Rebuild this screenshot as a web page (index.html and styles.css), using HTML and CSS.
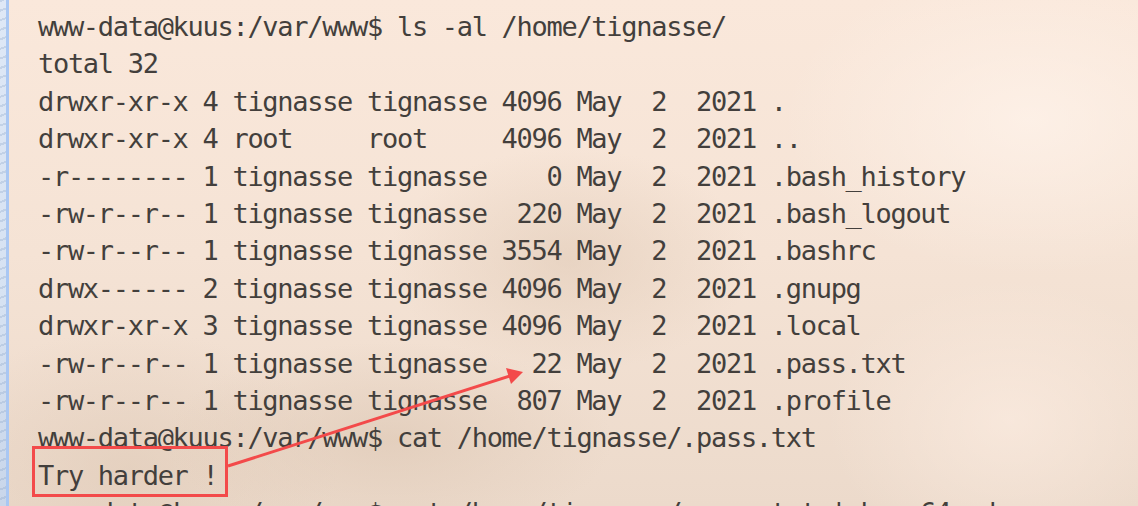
FILE: index.html
```html
<!DOCTYPE html>
<html lang="en">
<head>
<meta charset="utf-8">
<title>Terminal</title>
<link rel="stylesheet" href="styles.css">
</head>
<body>
<div class="screen">
  <div class="wallpaper"></div>
  <div class="edge"></div>
  <main class="terminal">
<pre class="output">www-data@kuus:/var/www$ ls -al /home/tignasse/
total 32
drwxr-xr-x 4 tignasse tignasse 4096 May  2  2021 .
drwxr-xr-x 4 root     root     4096 May  2  2021 ..
-r-------- 1 tignasse tignasse    0 May  2  2021 .bash_history
-rw-r--r-- 1 tignasse tignasse  220 May  2  2021 .bash_logout
-rw-r--r-- 1 tignasse tignasse 3554 May  2  2021 .bashrc
drwx------ 2 tignasse tignasse 4096 May  2  2021 .gnupg
drwxr-xr-x 3 tignasse tignasse 4096 May  2  2021 .local
-rw-r--r-- 1 tignasse tignasse   22 May  2  2021 .pass.txt
-rw-r--r-- 1 tignasse tignasse  807 May  2  2021 .profile
www-data@kuus:/var/www$ cat /home/tignasse/.pass.txt
Try harder !
www-data@kuus:/var/www$ cat /home/tignasse/.pass.txt | base64 -d</pre>
  </main>
  <svg class="annotation" width="1138" height="506" viewBox="0 0 1138 506" aria-hidden="true">
    <rect x="33.5" y="447.5" width="193" height="48" fill="none" stroke="#f34a4a" stroke-width="3"/>
    <line x1="228" y1="466" x2="510" y2="376" stroke="#f34a4a" stroke-width="3"/>
    <polygon points="523,372 506,368 511,384" fill="#f34a4a"/>
  </svg>
</div>
</body>
</html>
```

FILE: styles.css
```css
html, body {
  margin: 0;
  padding: 0;
  width: 1138px;
  height: 506px;
  overflow: hidden;
}

.screen {
  position: relative;
  display: flex;
  width: 1138px;
  height: 506px;
  overflow: hidden;
}

.wallpaper {
  width: 6px;
  flex: none;
  background:
    repeating-linear-gradient(160deg, rgba(120,150,190,0.25) 0 2px, transparent 2px 9px),
    linear-gradient(180deg, #dfe8f6 0%, #d6e2f2 60%, #c9d6ea 100%);
}

.edge {
  width: 3px;
  flex: none;
  background: #a9c7f3;
}

.terminal {
  flex: 1;
  padding: 8px 0 0 29px;
  overflow: hidden;
  background:
    radial-gradient(ellipse 260px 160px at 560px 260px, rgba(222,200,180,0.55), transparent 70%),
    radial-gradient(ellipse 320px 140px at 380px 440px, rgba(218,196,176,0.55), transparent 70%),
    radial-gradient(ellipse 300px 200px at 120px 470px, rgba(220,198,178,0.5), transparent 70%),
    radial-gradient(ellipse 350px 220px at 1020px 120px, rgba(255,244,236,0.7), transparent 70%),
    radial-gradient(ellipse 260px 200px at 1000px 420px, rgba(255,240,230,0.55), transparent 70%),
    linear-gradient(180deg, #fae8db 0%, #f5e3d5 50%, #ecdacb 100%);
}

.output {
  margin: 0;
  font-family: "DejaVu Sans Mono", "Liberation Mono", monospace;
  font-size: 27px;
  letter-spacing: -1.3px;
  line-height: 37.4px;
  color: #433f3c;
  white-space: pre;
}

.annotation {
  position: absolute;
  left: 0;
  top: 0;
  pointer-events: none;
}
```
